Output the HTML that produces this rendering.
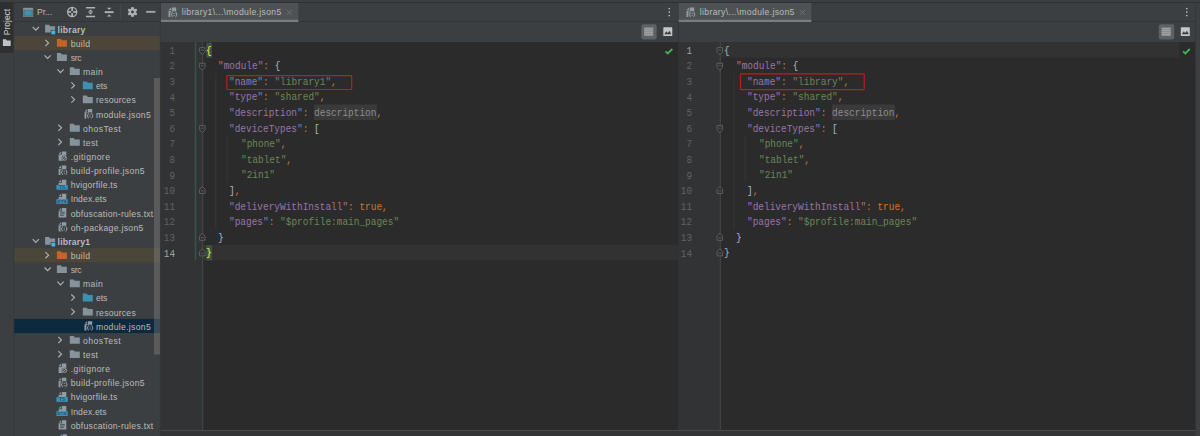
<!DOCTYPE html>
<html><head><meta charset="utf-8"><title>ide</title>
<style>
html,body{margin:0;padding:0}
body{width:1200px;height:436px;overflow:hidden;background:#3c3f41;position:relative;font-family:"Liberation Sans",sans-serif;font-size:8.64px;color:#bbbbbb}
.a{position:absolute}
.t{position:absolute;white-space:pre;line-height:14.145px;height:14.145px;color:#bbbbbb}
.b{font-weight:bold}
svg{position:absolute;overflow:visible}
.c{position:absolute;white-space:pre;font-family:"Liberation Mono",monospace;font-size:10.8px;line-height:15.6px;height:15.6px;color:#a9b7c6;transform-origin:0 0;transform:scaleX(0.875)}
.k{color:#9876aa}.s{color:#6a8759}.o{color:#cc7832}.p{color:#a9b7c6}
.ln{position:absolute;font-family:"Liberation Mono",monospace;font-size:10.6px;line-height:15.6px;height:15.6px;color:#606366;text-align:left;transform-origin:100% 0;transform:scaleX(0.875)}
</style></head><body>


<svg class="L" width="1200" height="436" viewBox="0 0 1200 436" style="left:0;top:0">
<rect x="0" y="0" width="1200" height="2" fill="#3c3f41"/>
<rect x="0" y="2" width="1200" height="1" fill="#2f3132"/>
<rect x="0" y="3" width="13.4" height="433" fill="#3c3f41"/>
<rect x="0" y="3" width="13.4" height="50" fill="#2d2f30"/>
<rect x="13.4" y="3" width="0.8" height="433" fill="#35383a"/>
<svg x="2.9" y="39.2" width="7.8" height="6.8" viewBox="0 0 10 7.8" preserveAspectRatio="none"><g fill="#c0c2c4"><path d="M0 0 H3.9 L5 1.4 H10 V7.8 H0 Z"/></g></svg>
<rect x="14.2" y="21" width="146" height="1" fill="#323537"/>
<svg x="23" y="7.8" width="10.2" height="9.2" viewBox="0 0 10.2 9.2"><rect x="0.3" y="0.3" width="9.6" height="8.6" fill="#626b71" stroke="#7b868c" stroke-width="0.6"/><rect x="0.3" y="0.3" width="9.6" height="1.7" fill="#8b969c"/><rect x="1.7" y="2.8" width="6.9" height="4.8" fill="#3d93b8"/></svg>
<svg x="66.9" y="6.7" width="10.5" height="10.5" viewBox="0 0 10.5 10.5"><circle cx="5.25" cy="5.25" r="4.6" fill="none" stroke="#afb1b3" stroke-width="1.25"/><path d="M5.25 0.8V4.2M5.25 6.3V9.7M0.8 5.25H4.2M6.3 5.25H9.7" stroke="#afb1b3" stroke-width="1.8"/></svg>
<svg x="86" y="6.9" width="9.1" height="10.3" viewBox="0 0 9.1 10.3"><path d="M0 0.8H9.1M0 9.5H9.1" stroke="#afb1b3" stroke-width="1.5"/><path d="M4.55 2.6 L6.9 4.6 H2.2Z M4.55 7.7 L6.9 5.7 H2.2Z" fill="#afb1b3"/><rect x="2.6" y="4.4" width="3.9" height="1.5" fill="#8a8c8e"/></svg>
<svg x="104.7" y="6.9" width="8.9" height="10.3" viewBox="0 0 8.9 10.3"><path d="M0 5.25H8.9" stroke="#afb1b3" stroke-width="1.9"/><path d="M4.45 2.9 L6.8 0.8 H2.1Z M4.45 7.5 L6.8 9.6 H2.1Z" fill="#afb1b3"/></svg>
<rect x="120.2" y="5" width="0.9" height="14" fill="#4a4d4f"/>
<svg x="127.6" y="6.7" width="9.8" height="10.6" viewBox="-5 -5.3 10 10.6"><g fill="#afb1b3"><circle r="3.3"/><path d="M-1.9 -2.6 L-0.9 -5.1 H0.9 L1.9 -2.6Z" transform="rotate(0)"/><path d="M-1.9 -2.6 L-0.9 -5.1 H0.9 L1.9 -2.6Z" transform="rotate(60)"/><path d="M-1.9 -2.6 L-0.9 -5.1 H0.9 L1.9 -2.6Z" transform="rotate(120)"/><path d="M-1.9 -2.6 L-0.9 -5.1 H0.9 L1.9 -2.6Z" transform="rotate(180)"/><path d="M-1.9 -2.6 L-0.9 -5.1 H0.9 L1.9 -2.6Z" transform="rotate(240)"/><path d="M-1.9 -2.6 L-0.9 -5.1 H0.9 L1.9 -2.6Z" transform="rotate(300)"/></g><circle r="1.45" fill="#3c3f41"/></svg>
<rect x="146.2" y="10.9" width="9.2" height="1.9" fill="#a3a5a7"/>
<svg x="32.7" y="27.02" width="6.2" height="3.2" viewBox="0 0 6.2 3.2"><g><path d="M0 0 L3.1 3.2 L6.2 0" fill="none" stroke="#afb1b3" stroke-width="1.15"/></g></svg>
<svg x="45.1" y="24.82" width="10" height="7.8" viewBox="0 0 10 7.8"><g fill="#87939a"><path d="M0 0 H3.9 L5 1.4 H10 V7.8 H0 Z"/></g><rect x="5.6" y="5" width="5" height="5" fill="#3c3f41"/><rect x="6.3" y="5.7" width="3.8" height="3.8" fill="#40b6e0"/></svg>
<rect x="14.2" y="36" width="145.8" height="14.14" fill="#4b4639"/>
<svg x="45.4" y="39.87" width="3.2" height="6.2" viewBox="0 0 3.2 6.2"><g><path d="M0 0 L3.2 3.1 L0 6.2" fill="none" stroke="#afb1b3" stroke-width="1.15"/></g></svg>
<svg x="56.9" y="38.97" width="10" height="7.8" viewBox="0 0 10 7.8"><g fill="#c4632c"><path d="M0 0 H3.9 L5 1.4 H10 V7.8 H0 Z"/></g></svg>
<svg x="44.5" y="55.31" width="6.2" height="3.2" viewBox="0 0 6.2 3.2"><g><path d="M0 0 L3.1 3.2 L6.2 0" fill="none" stroke="#afb1b3" stroke-width="1.15"/></g></svg>
<svg x="56.9" y="53.11" width="10" height="7.8" viewBox="0 0 10 7.8"><g fill="#87939a"><path d="M0 0 H3.9 L5 1.4 H10 V7.8 H0 Z"/></g></svg>
<svg x="57.4" y="69.46" width="6.2" height="3.2" viewBox="0 0 6.2 3.2"><g><path d="M0 0 L3.1 3.2 L6.2 0" fill="none" stroke="#afb1b3" stroke-width="1.15"/></g></svg>
<svg x="69.8" y="67.26" width="10" height="7.8" viewBox="0 0 10 7.8"><g fill="#87939a"><path d="M0 0 H3.9 L5 1.4 H10 V7.8 H0 Z"/></g></svg>
<svg x="71.3" y="82.3" width="3.2" height="6.2" viewBox="0 0 3.2 6.2"><g><path d="M0 0 L3.2 3.1 L0 6.2" fill="none" stroke="#afb1b3" stroke-width="1.15"/></g></svg>
<svg x="82.8" y="81.4" width="10" height="7.8" viewBox="0 0 10 7.8"><g fill="#3e8fb0"><path d="M0 0 H3.9 L5 1.4 H10 V7.8 H0 Z"/></g></svg>
<svg x="71.3" y="96.45" width="3.2" height="6.2" viewBox="0 0 3.2 6.2"><g><path d="M0 0 L3.2 3.1 L0 6.2" fill="none" stroke="#afb1b3" stroke-width="1.15"/></g></svg>
<svg x="82.8" y="95.55" width="10" height="7.8" viewBox="0 0 10 7.8"><g fill="#87939a"><path d="M0 0 H3.9 L5 1.4 H10 V7.8 H0 Z"/></g></svg>
<svg x="84.5" y="108.99" width="9" height="9.6" viewBox="0 0 9 10.4" preserveAspectRatio="none"><g><path d="M3.4 0 H7.7 V10.2 H0 V3.4 H3.4 Z" fill="#909ca4"/><path d="M2.6 0 V2.6 H0 Z" fill="#909ca4"/></g><rect x="1.9" y="3.9" width="7.6" height="6.9" rx="1.5" fill="#3c3f41"/><g fill="none" stroke="#aeb8be" stroke-width="0.85"><path d="M4.3 4.7 C3.2 4.7 3.7 6.3 3.3 6.9 L2.6 7.3 L3.3 7.7 C3.7 8.3 3.2 9.9 4.3 9.9"/><path d="M7 4.7 C8.1 4.7 7.6 6.3 8 6.9 L8.7 7.3 L8 7.7 C7.6 8.3 8.1 9.9 7 9.9"/><path d="M5.65 5.8 V6.8 M5.65 7.9 V8.9" stroke-width="1"/></g></svg>
<svg x="58.3" y="124.74" width="3.2" height="6.2" viewBox="0 0 3.2 6.2"><g><path d="M0 0 L3.2 3.1 L0 6.2" fill="none" stroke="#afb1b3" stroke-width="1.15"/></g></svg>
<svg x="69.8" y="123.84" width="10" height="7.8" viewBox="0 0 10 7.8"><g fill="#87939a"><path d="M0 0 H3.9 L5 1.4 H10 V7.8 H0 Z"/></g></svg>
<svg x="58.3" y="138.88" width="3.2" height="6.2" viewBox="0 0 3.2 6.2"><g><path d="M0 0 L3.2 3.1 L0 6.2" fill="none" stroke="#afb1b3" stroke-width="1.15"/></g></svg>
<svg x="69.8" y="137.98" width="10" height="7.8" viewBox="0 0 10 7.8"><g fill="#87939a"><path d="M0 0 H3.9 L5 1.4 H10 V7.8 H0 Z"/></g></svg>
<svg x="58.6" y="151.43" width="9" height="9.6" viewBox="0 0 9 10.4" preserveAspectRatio="none"><g><path d="M3.4 0 H7.7 V10.2 H0 V3.4 H3.4 Z" fill="#909ca4"/><path d="M2.6 0 V2.6 H0 Z" fill="#909ca4"/></g><circle cx="6" cy="7.4" r="2.9" fill="#3c3f41"/><circle cx="6" cy="7.4" r="2.1" fill="none" stroke="#aab3b9" stroke-width="0.8"/><path d="M4.6 8.8L7.4 6" stroke="#aab3b9" stroke-width="0.8"/></svg>
<svg x="58.6" y="165.57" width="9" height="9.6" viewBox="0 0 9 10.4" preserveAspectRatio="none"><g><path d="M3.4 0 H7.7 V10.2 H0 V3.4 H3.4 Z" fill="#909ca4"/><path d="M2.6 0 V2.6 H0 Z" fill="#909ca4"/></g><rect x="1.9" y="3.9" width="7.6" height="6.9" rx="1.5" fill="#3c3f41"/><g fill="none" stroke="#aeb8be" stroke-width="0.85"><path d="M4.3 4.7 C3.2 4.7 3.7 6.3 3.3 6.9 L2.6 7.3 L3.3 7.7 C3.7 8.3 3.2 9.9 4.3 9.9"/><path d="M7 4.7 C8.1 4.7 7.6 6.3 8 6.9 L8.7 7.3 L8 7.7 C7.6 8.3 8.1 9.9 7 9.9"/><path d="M5.65 5.8 V6.8 M5.65 7.9 V8.9" stroke-width="1"/></g></svg>
<svg x="58.6" y="179.72" width="9" height="9.6" viewBox="0 0 9 10.4" preserveAspectRatio="none"><g><path d="M3.4 0 H7.7 V10.2 H0 V3.4 H3.4 Z" fill="#909ca4"/><path d="M2.6 0 V2.6 H0 Z" fill="#909ca4"/></g><rect x="-2.2" y="5.7" width="11.4" height="5.1" fill="#3592b8"/><text x="3.5" y="10.1" font-family="Liberation Sans" font-size="4.9" font-weight="bold" fill="#2a556a" text-anchor="middle">TS</text></svg>
<svg x="58.6" y="193.86" width="9" height="9.6" viewBox="0 0 9 10.4" preserveAspectRatio="none"><g><path d="M3.4 0 H7.7 V10.2 H0 V3.4 H3.4 Z" fill="#909ca4"/><path d="M2.6 0 V2.6 H0 Z" fill="#909ca4"/></g><rect x="-2.2" y="5.7" width="11.4" height="5.1" fill="#3592b8"/><text x="3.5" y="10.1" font-family="Liberation Sans" font-size="4.7" font-weight="bold" fill="#2a556a" text-anchor="middle">ETS</text></svg>
<svg x="58.6" y="208.01" width="9" height="9.6" viewBox="0 0 9 10.4" preserveAspectRatio="none"><g><path d="M3.4 0 H7.7 V10.2 H0 V3.4 H3.4 Z" fill="#909ca4"/><path d="M2.6 0 V2.6 H0 Z" fill="#909ca4"/></g><path d="M1.6 4.6H6.2M1.6 6.3H6.2M1.6 8H5" stroke="#3c3f41" stroke-width="0.8"/></svg>
<svg x="58.6" y="222.15" width="9" height="9.6" viewBox="0 0 9 10.4" preserveAspectRatio="none"><g><path d="M3.4 0 H7.7 V10.2 H0 V3.4 H3.4 Z" fill="#909ca4"/><path d="M2.6 0 V2.6 H0 Z" fill="#909ca4"/></g><rect x="1.9" y="3.9" width="7.6" height="6.9" rx="1.5" fill="#3c3f41"/><g fill="none" stroke="#aeb8be" stroke-width="0.85"><path d="M4.3 4.7 C3.2 4.7 3.7 6.3 3.3 6.9 L2.6 7.3 L3.3 7.7 C3.7 8.3 3.2 9.9 4.3 9.9"/><path d="M7 4.7 C8.1 4.7 7.6 6.3 8 6.9 L8.7 7.3 L8 7.7 C7.6 8.3 8.1 9.9 7 9.9"/><path d="M5.65 5.8 V6.8 M5.65 7.9 V8.9" stroke-width="1"/></g></svg>
<svg x="32.7" y="239.2" width="6.2" height="3.2" viewBox="0 0 6.2 3.2"><g><path d="M0 0 L3.1 3.2 L6.2 0" fill="none" stroke="#afb1b3" stroke-width="1.15"/></g></svg>
<svg x="45.1" y="237" width="10" height="7.8" viewBox="0 0 10 7.8"><g fill="#87939a"><path d="M0 0 H3.9 L5 1.4 H10 V7.8 H0 Z"/></g><rect x="5.6" y="5" width="5" height="5" fill="#3c3f41"/><rect x="6.3" y="5.7" width="3.8" height="3.8" fill="#40b6e0"/></svg>
<rect x="14.2" y="248.17" width="145.8" height="14.14" fill="#4b4639"/>
<svg x="45.4" y="252.04" width="3.2" height="6.2" viewBox="0 0 3.2 6.2"><g><path d="M0 0 L3.2 3.1 L0 6.2" fill="none" stroke="#afb1b3" stroke-width="1.15"/></g></svg>
<svg x="56.9" y="251.14" width="10" height="7.8" viewBox="0 0 10 7.8"><g fill="#c4632c"><path d="M0 0 H3.9 L5 1.4 H10 V7.8 H0 Z"/></g></svg>
<svg x="44.5" y="267.49" width="6.2" height="3.2" viewBox="0 0 6.2 3.2"><g><path d="M0 0 L3.1 3.2 L6.2 0" fill="none" stroke="#afb1b3" stroke-width="1.15"/></g></svg>
<svg x="56.9" y="265.29" width="10" height="7.8" viewBox="0 0 10 7.8"><g fill="#87939a"><path d="M0 0 H3.9 L5 1.4 H10 V7.8 H0 Z"/></g></svg>
<svg x="57.4" y="281.63" width="6.2" height="3.2" viewBox="0 0 6.2 3.2"><g><path d="M0 0 L3.1 3.2 L6.2 0" fill="none" stroke="#afb1b3" stroke-width="1.15"/></g></svg>
<svg x="69.8" y="279.43" width="10" height="7.8" viewBox="0 0 10 7.8"><g fill="#87939a"><path d="M0 0 H3.9 L5 1.4 H10 V7.8 H0 Z"/></g></svg>
<svg x="71.3" y="294.48" width="3.2" height="6.2" viewBox="0 0 3.2 6.2"><g><path d="M0 0 L3.2 3.1 L0 6.2" fill="none" stroke="#afb1b3" stroke-width="1.15"/></g></svg>
<svg x="82.8" y="293.58" width="10" height="7.8" viewBox="0 0 10 7.8"><g fill="#3e8fb0"><path d="M0 0 H3.9 L5 1.4 H10 V7.8 H0 Z"/></g></svg>
<svg x="71.3" y="308.62" width="3.2" height="6.2" viewBox="0 0 3.2 6.2"><g><path d="M0 0 L3.2 3.1 L0 6.2" fill="none" stroke="#afb1b3" stroke-width="1.15"/></g></svg>
<svg x="82.8" y="307.72" width="10" height="7.8" viewBox="0 0 10 7.8"><g fill="#87939a"><path d="M0 0 H3.9 L5 1.4 H10 V7.8 H0 Z"/></g></svg>
<rect x="14.2" y="318.9" width="145.8" height="14.14" fill="#0d293e"/>
<svg x="84.5" y="321.17" width="9" height="9.6" viewBox="0 0 9 10.4" preserveAspectRatio="none"><g><path d="M3.4 0 H7.7 V10.2 H0 V3.4 H3.4 Z" fill="#909ca4"/><path d="M2.6 0 V2.6 H0 Z" fill="#909ca4"/></g><rect x="1.9" y="3.9" width="7.6" height="6.9" rx="1.5" fill="#0d293e"/><g fill="none" stroke="#aeb8be" stroke-width="0.85"><path d="M4.3 4.7 C3.2 4.7 3.7 6.3 3.3 6.9 L2.6 7.3 L3.3 7.7 C3.7 8.3 3.2 9.9 4.3 9.9"/><path d="M7 4.7 C8.1 4.7 7.6 6.3 8 6.9 L8.7 7.3 L8 7.7 C7.6 8.3 8.1 9.9 7 9.9"/><path d="M5.65 5.8 V6.8 M5.65 7.9 V8.9" stroke-width="1"/></g></svg>
<svg x="58.3" y="336.91" width="3.2" height="6.2" viewBox="0 0 3.2 6.2"><g><path d="M0 0 L3.2 3.1 L0 6.2" fill="none" stroke="#afb1b3" stroke-width="1.15"/></g></svg>
<svg x="69.8" y="336.01" width="10" height="7.8" viewBox="0 0 10 7.8"><g fill="#87939a"><path d="M0 0 H3.9 L5 1.4 H10 V7.8 H0 Z"/></g></svg>
<svg x="58.3" y="351.06" width="3.2" height="6.2" viewBox="0 0 3.2 6.2"><g><path d="M0 0 L3.2 3.1 L0 6.2" fill="none" stroke="#afb1b3" stroke-width="1.15"/></g></svg>
<svg x="69.8" y="350.16" width="10" height="7.8" viewBox="0 0 10 7.8"><g fill="#87939a"><path d="M0 0 H3.9 L5 1.4 H10 V7.8 H0 Z"/></g></svg>
<svg x="58.6" y="363.6" width="9" height="9.6" viewBox="0 0 9 10.4" preserveAspectRatio="none"><g><path d="M3.4 0 H7.7 V10.2 H0 V3.4 H3.4 Z" fill="#909ca4"/><path d="M2.6 0 V2.6 H0 Z" fill="#909ca4"/></g><circle cx="6" cy="7.4" r="2.9" fill="#3c3f41"/><circle cx="6" cy="7.4" r="2.1" fill="none" stroke="#aab3b9" stroke-width="0.8"/><path d="M4.6 8.8L7.4 6" stroke="#aab3b9" stroke-width="0.8"/></svg>
<svg x="58.6" y="377.75" width="9" height="9.6" viewBox="0 0 9 10.4" preserveAspectRatio="none"><g><path d="M3.4 0 H7.7 V10.2 H0 V3.4 H3.4 Z" fill="#909ca4"/><path d="M2.6 0 V2.6 H0 Z" fill="#909ca4"/></g><rect x="1.9" y="3.9" width="7.6" height="6.9" rx="1.5" fill="#3c3f41"/><g fill="none" stroke="#aeb8be" stroke-width="0.85"><path d="M4.3 4.7 C3.2 4.7 3.7 6.3 3.3 6.9 L2.6 7.3 L3.3 7.7 C3.7 8.3 3.2 9.9 4.3 9.9"/><path d="M7 4.7 C8.1 4.7 7.6 6.3 8 6.9 L8.7 7.3 L8 7.7 C7.6 8.3 8.1 9.9 7 9.9"/><path d="M5.65 5.8 V6.8 M5.65 7.9 V8.9" stroke-width="1"/></g></svg>
<svg x="58.6" y="391.89" width="9" height="9.6" viewBox="0 0 9 10.4" preserveAspectRatio="none"><g><path d="M3.4 0 H7.7 V10.2 H0 V3.4 H3.4 Z" fill="#909ca4"/><path d="M2.6 0 V2.6 H0 Z" fill="#909ca4"/></g><rect x="-2.2" y="5.7" width="11.4" height="5.1" fill="#3592b8"/><text x="3.5" y="10.1" font-family="Liberation Sans" font-size="4.9" font-weight="bold" fill="#2a556a" text-anchor="middle">TS</text></svg>
<svg x="58.6" y="406.04" width="9" height="9.6" viewBox="0 0 9 10.4" preserveAspectRatio="none"><g><path d="M3.4 0 H7.7 V10.2 H0 V3.4 H3.4 Z" fill="#909ca4"/><path d="M2.6 0 V2.6 H0 Z" fill="#909ca4"/></g><rect x="-2.2" y="5.7" width="11.4" height="5.1" fill="#3592b8"/><text x="3.5" y="10.1" font-family="Liberation Sans" font-size="4.7" font-weight="bold" fill="#2a556a" text-anchor="middle">ETS</text></svg>
<svg x="58.6" y="420.18" width="9" height="9.6" viewBox="0 0 9 10.4" preserveAspectRatio="none"><g><path d="M3.4 0 H7.7 V10.2 H0 V3.4 H3.4 Z" fill="#909ca4"/><path d="M2.6 0 V2.6 H0 Z" fill="#909ca4"/></g><path d="M1.6 4.6H6.2M1.6 6.3H6.2M1.6 8H5" stroke="#3c3f41" stroke-width="0.8"/></svg>
<svg x="59.2" y="434.33" width="9" height="9.6" viewBox="0 0 9 10.4" preserveAspectRatio="none"><g><path d="M3.4 0 H7.7 V10.2 H0 V3.4 H3.4 Z" fill="#909ca4"/><path d="M2.6 0 V2.6 H0 Z" fill="#909ca4"/></g><rect x="1.9" y="3.9" width="7.6" height="6.9" rx="1.5" fill="#3c3f41"/><g fill="none" stroke="#aeb8be" stroke-width="0.85"><path d="M4.3 4.7 C3.2 4.7 3.7 6.3 3.3 6.9 L2.6 7.3 L3.3 7.7 C3.7 8.3 3.2 9.9 4.3 9.9"/><path d="M7 4.7 C8.1 4.7 7.6 6.3 8 6.9 L8.7 7.3 L8 7.7 C7.6 8.3 8.1 9.9 7 9.9"/><path d="M5.65 5.8 V6.8 M5.65 7.9 V8.9" stroke-width="1"/></g></svg>
<rect x="160.3" y="3" width="518" height="18.6" fill="#3c3f41"/>
<rect x="160.3" y="21.2" width="518" height="0.8" fill="#323537"/>
<rect x="160.8" y="3" width="137.5" height="19" fill="#4e5254"/>
<rect x="160.8" y="19.8" width="137.5" height="2.2" fill="#787d82"/>
<svg x="168.5" y="7.5" width="9" height="9.8" viewBox="0 0 9 10.4" preserveAspectRatio="none"><g><path d="M3.4 0 H7.7 V10.2 H0 V3.4 H3.4 Z" fill="#909ca4"/><path d="M2.6 0 V2.6 H0 Z" fill="#909ca4"/></g><rect x="1.9" y="3.9" width="7.6" height="6.9" rx="1.5" fill="#4e5254"/><g fill="none" stroke="#aeb8be" stroke-width="0.85"><path d="M4.3 4.7 C3.2 4.7 3.7 6.3 3.3 6.9 L2.6 7.3 L3.3 7.7 C3.7 8.3 3.2 9.9 4.3 9.9"/><path d="M7 4.7 C8.1 4.7 7.6 6.3 8 6.9 L8.7 7.3 L8 7.7 C7.6 8.3 8.1 9.9 7 9.9"/><path d="M5.65 5.8 V6.8 M5.65 7.9 V8.9" stroke-width="1"/></g></svg>
<svg x="286.7" y="9.6" width="5.6" height="5.6" viewBox="0 0 5.6 5.6"><path d="M0.3 0.3L5.3 5.3M5.3 0.3L0.3 5.3" stroke="#6e7275" stroke-width="0.9"/></svg>
<rect x="160.3" y="22" width="518" height="20" fill="#3c3f41"/>
<rect x="160.8" y="42" width="517.5" height="388.4" fill="#2b2b2b"/>
<rect x="160.8" y="42" width="42.2" height="388.4" fill="#313335"/>
<rect x="203" y="244.8" width="475.3" height="15.6" fill="#323232"/>
<rect x="202.3" y="42" width="0.9" height="388.4" fill="#484a4b"/>
<rect x="194.7" y="42.3" width="1.6" height="218.2" fill="#3a514b"/>
<svg x="199.1" y="47.15" width="6.5" height="8.1" viewBox="0 0 6.5 8.1"><g><path d="M0.5 0.5 H6 V4.6 L3.25 7.6 L0.5 4.6 Z" fill="#2d2f30" stroke="#6a6a6a" stroke-width="0.8"/><path d="M1.9 3 H4.6" stroke="#6a6a6a" stroke-width="0.8"/></g></svg>
<svg x="199.1" y="62.75" width="6.5" height="8.1" viewBox="0 0 6.5 8.1"><g><path d="M0.5 0.5 H6 V4.6 L3.25 7.6 L0.5 4.6 Z" fill="#2d2f30" stroke="#6a6a6a" stroke-width="0.8"/><path d="M1.9 3 H4.6" stroke="#6a6a6a" stroke-width="0.8"/></g></svg>
<svg x="199.1" y="125.15" width="6.5" height="8.1" viewBox="0 0 6.5 8.1"><g><path d="M0.5 0.5 H6 V4.6 L3.25 7.6 L0.5 4.6 Z" fill="#2d2f30" stroke="#6a6a6a" stroke-width="0.8"/><path d="M1.9 3 H4.6" stroke="#6a6a6a" stroke-width="0.8"/></g></svg>
<svg x="199.1" y="185.85" width="6.5" height="8.1" viewBox="0 0 6.5 8.1"><g><path d="M0.5 7.6 H6 V3.5 L3.25 0.5 L0.5 3.5 Z" fill="#2d2f30" stroke="#6a6a6a" stroke-width="0.8"/><path d="M1.9 5 H4.6" stroke="#6a6a6a" stroke-width="0.8"/></g></svg>
<svg x="199.1" y="232.65" width="6.5" height="8.1" viewBox="0 0 6.5 8.1"><g><path d="M0.5 7.6 H6 V3.5 L3.25 0.5 L0.5 3.5 Z" fill="#2d2f30" stroke="#6a6a6a" stroke-width="0.8"/><path d="M1.9 5 H4.6" stroke="#6a6a6a" stroke-width="0.8"/></g></svg>
<svg x="199.1" y="248.25" width="6.5" height="8.1" viewBox="0 0 6.5 8.1"><g><path d="M0.5 7.6 H6 V3.5 L3.25 0.5 L0.5 3.5 Z" fill="#2d2f30" stroke="#6a6a6a" stroke-width="0.8"/><path d="M1.9 5 H4.6" stroke="#6a6a6a" stroke-width="0.8"/></g></svg>
<rect x="215.5" y="73.2" width="0.8" height="156" fill="#3a3a3a"/>
<rect x="226.7" y="135.6" width="0.8" height="46.8" fill="#3a3a3a"/>
<rect x="206.2" y="42.6" width="5.8" height="15.2" fill="#3b514d"/>
<rect x="206.2" y="245.2" width="5.8" height="15.2" fill="#3b514d"/>
<rect x="313.93" y="104.5" width="62.97" height="15.5" fill="#3a3a3a"/>
<rect x="678.3" y="3" width="521.7" height="18.6" fill="#3c3f41"/>
<rect x="678.3" y="21.2" width="521.7" height="0.8" fill="#323537"/>
<rect x="678.8" y="3" width="132.5" height="19" fill="#4e5254"/>
<rect x="678.8" y="19.8" width="132.5" height="2.2" fill="#787d82"/>
<svg x="686.5" y="7.5" width="9" height="9.8" viewBox="0 0 9 10.4" preserveAspectRatio="none"><g><path d="M3.4 0 H7.7 V10.2 H0 V3.4 H3.4 Z" fill="#909ca4"/><path d="M2.6 0 V2.6 H0 Z" fill="#909ca4"/></g><rect x="1.9" y="3.9" width="7.6" height="6.9" rx="1.5" fill="#4e5254"/><g fill="none" stroke="#aeb8be" stroke-width="0.85"><path d="M4.3 4.7 C3.2 4.7 3.7 6.3 3.3 6.9 L2.6 7.3 L3.3 7.7 C3.7 8.3 3.2 9.9 4.3 9.9"/><path d="M7 4.7 C8.1 4.7 7.6 6.3 8 6.9 L8.7 7.3 L8 7.7 C7.6 8.3 8.1 9.9 7 9.9"/><path d="M5.65 5.8 V6.8 M5.65 7.9 V8.9" stroke-width="1"/></g></svg>
<svg x="799.7" y="9.6" width="5.6" height="5.6" viewBox="0 0 5.6 5.6"><path d="M0.3 0.3L5.3 5.3M5.3 0.3L0.3 5.3" stroke="#6e7275" stroke-width="0.9"/></svg>
<rect x="678.3" y="22" width="521.7" height="20" fill="#3c3f41"/>
<rect x="678.8" y="42" width="521.2" height="388.4" fill="#2b2b2b"/>
<rect x="678.8" y="42" width="41.7" height="388.4" fill="#313335"/>
<rect x="720.5" y="42" width="479.5" height="15.6" fill="#323232"/>
<rect x="719.8" y="42" width="0.9" height="388.4" fill="#484a4b"/>
<svg x="716.6" y="47.15" width="6.5" height="8.1" viewBox="0 0 6.5 8.1"><g><path d="M0.5 0.5 H6 V4.6 L3.25 7.6 L0.5 4.6 Z" fill="#2d2f30" stroke="#6a6a6a" stroke-width="0.8"/><path d="M1.9 3 H4.6" stroke="#6a6a6a" stroke-width="0.8"/></g></svg>
<svg x="716.6" y="62.75" width="6.5" height="8.1" viewBox="0 0 6.5 8.1"><g><path d="M0.5 0.5 H6 V4.6 L3.25 7.6 L0.5 4.6 Z" fill="#2d2f30" stroke="#6a6a6a" stroke-width="0.8"/><path d="M1.9 3 H4.6" stroke="#6a6a6a" stroke-width="0.8"/></g></svg>
<svg x="716.6" y="125.15" width="6.5" height="8.1" viewBox="0 0 6.5 8.1"><g><path d="M0.5 0.5 H6 V4.6 L3.25 7.6 L0.5 4.6 Z" fill="#2d2f30" stroke="#6a6a6a" stroke-width="0.8"/><path d="M1.9 3 H4.6" stroke="#6a6a6a" stroke-width="0.8"/></g></svg>
<svg x="716.6" y="185.85" width="6.5" height="8.1" viewBox="0 0 6.5 8.1"><g><path d="M0.5 7.6 H6 V3.5 L3.25 0.5 L0.5 3.5 Z" fill="#2d2f30" stroke="#6a6a6a" stroke-width="0.8"/><path d="M1.9 5 H4.6" stroke="#6a6a6a" stroke-width="0.8"/></g></svg>
<svg x="716.6" y="232.65" width="6.5" height="8.1" viewBox="0 0 6.5 8.1"><g><path d="M0.5 7.6 H6 V3.5 L3.25 0.5 L0.5 3.5 Z" fill="#2d2f30" stroke="#6a6a6a" stroke-width="0.8"/><path d="M1.9 5 H4.6" stroke="#6a6a6a" stroke-width="0.8"/></g></svg>
<svg x="716.6" y="248.25" width="6.5" height="8.1" viewBox="0 0 6.5 8.1"><g><path d="M0.5 7.6 H6 V3.5 L3.25 0.5 L0.5 3.5 Z" fill="#2d2f30" stroke="#6a6a6a" stroke-width="0.8"/><path d="M1.9 5 H4.6" stroke="#6a6a6a" stroke-width="0.8"/></g></svg>
<rect x="733.5" y="73.2" width="0.8" height="156" fill="#3a3a3a"/>
<rect x="744.7" y="135.6" width="0.8" height="46.8" fill="#3a3a3a"/>
<rect x="831.93" y="104.5" width="62.97" height="15.5" fill="#3a3a3a"/>
<rect x="226.9" y="75.6" width="124.8" height="13.9" rx="0.5" fill="none" stroke="#bf1c22" stroke-width="1.2"/>
<rect x="740.5" y="73.8" width="123.7" height="15.8" rx="0.5" fill="none" stroke="#bf1c22" stroke-width="1.2"/>
<rect x="668.45" y="7.75" width="1.7" height="1.7" rx="1" fill="#b4b6b8"/>
<rect x="668.45" y="11.2" width="1.7" height="1.7" rx="1" fill="#b4b6b8"/>
<rect x="668.45" y="14.65" width="1.7" height="1.7" rx="1" fill="#b4b6b8"/>
<rect x="641.3" y="24.2" width="15.4" height="15.4" rx="2" fill="#5c6164"/>
<svg x="644.1" y="27.3" width="9.1" height="8.8" viewBox="0 0 9.4 9" preserveAspectRatio="none"><rect width="9.4" height="9" fill="#85898c"/><path d="M0 1.5H9.4M0 3.5H9.4M0 5.5H9.4M0 7.5H9.4" stroke="#a4a7aa" stroke-width="1"/></svg>
<svg x="663.3" y="27.3" width="9" height="8.8" viewBox="0 0 9 8.8"><rect width="9" height="8.8" rx="0.6" fill="#c4c6c8"/><path d="M1 7 L3 4 L4.4 5.8 L6.2 3.4 L8 7 Z" fill="#3c3f41"/></svg>
<rect x="661.5" y="42" width="15.6" height="16" fill="#2b2b2b"/>
<svg x="664.7" y="48.1" width="8.4" height="6.5" viewBox="0 0 8.4 6.5"><path d="M0.8 3.3 L3.1 5.3 L7.6 0.9" fill="none" stroke="#42b153" stroke-width="1.9"/></svg>
<rect x="1185.95" y="7.75" width="1.7" height="1.7" rx="1" fill="#b4b6b8"/>
<rect x="1185.95" y="11.2" width="1.7" height="1.7" rx="1" fill="#b4b6b8"/>
<rect x="1185.95" y="14.65" width="1.7" height="1.7" rx="1" fill="#b4b6b8"/>
<rect x="1158.8" y="24.2" width="15.4" height="15.4" rx="2" fill="#5c6164"/>
<svg x="1161.6" y="27.3" width="9.1" height="8.8" viewBox="0 0 9.4 9" preserveAspectRatio="none"><rect width="9.4" height="9" fill="#85898c"/><path d="M0 1.5H9.4M0 3.5H9.4M0 5.5H9.4M0 7.5H9.4" stroke="#a4a7aa" stroke-width="1"/></svg>
<svg x="1180.8" y="27.3" width="9" height="8.8" viewBox="0 0 9 8.8"><rect width="9" height="8.8" rx="0.6" fill="#c4c6c8"/><path d="M1 7 L3 4 L4.4 5.8 L6.2 3.4 L8 7 Z" fill="#3c3f41"/></svg>
<rect x="1179" y="42" width="15.6" height="16" fill="#2b2b2b"/>
<svg x="1182.2" y="48.1" width="8.4" height="6.5" viewBox="0 0 8.4 6.5"><path d="M0.8 3.3 L3.1 5.3 L7.6 0.9" fill="none" stroke="#42b153" stroke-width="1.9"/></svg>
<rect x="677.9" y="22" width="0.8" height="408.4" fill="#323537"/>
<rect x="1195.6" y="3" width="4.4" height="433" fill="#3c3f41"/>
<rect x="1195.2" y="3" width="0.8" height="428" fill="#323537"/>
<rect x="160.3" y="430.1" width="1035.2" height="0.9" fill="#4a4c4e"/>
<rect x="160.3" y="431" width="1035.2" height="5" fill="#323436"/>
<rect x="159.9" y="3" width="0.8" height="433" fill="#35383a"/>
</svg>
<div class="a" style="left:0;top:3px;width:13.4px;height:32px"><div class="a" style="left:7.1px;top:18.8px;transform:translate(-50%,-50%) rotate(-90deg);white-space:pre;font-size:8.5px;color:#d0d0d0;letter-spacing:0px">Project</div></div>
<div class="t" style="left:37px;top:5.2px">Pr...</div>
<div class="t b" style="left:57.6px;top:22.65px;letter-spacing:0.22px">library</div>
<div class="t" style="left:70.7px;top:36.8px;letter-spacing:0.27px">build</div>
<div class="t" style="left:70.7px;top:50.94px;letter-spacing:-0.3px">src</div>
<div class="t" style="left:83px;top:65.08px;letter-spacing:0.33px">main</div>
<div class="t" style="left:96px;top:79.23px;letter-spacing:-0.11px">ets</div>
<div class="t" style="left:96px;top:93.37px;letter-spacing:0.23px">resources</div>
<div class="t" style="left:96px;top:107.52px;letter-spacing:0.31px">module.json5</div>
<div class="t" style="left:83px;top:121.67px;letter-spacing:0.45px">ohosTest</div>
<div class="t" style="left:83px;top:135.81px;letter-spacing:0.36px">test</div>
<div class="t" style="left:70.7px;top:149.96px;letter-spacing:0.42px">.gitignore</div>
<div class="t" style="left:70.7px;top:164.1px;letter-spacing:0.35px">build-profile.json5</div>
<div class="t" style="left:70.7px;top:178.25px;letter-spacing:0.25px">hvigorfile.ts</div>
<div class="t" style="left:70.7px;top:192.39px;letter-spacing:0.12px">Index.ets</div>
<div class="t" style="left:70.7px;top:206.53px;letter-spacing:0.27px">obfuscation-rules.txt</div>
<div class="t" style="left:70.7px;top:220.68px;letter-spacing:0.3px">oh-package.json5</div>
<div class="t b" style="left:57.6px;top:234.82px;letter-spacing:0.17px">library1</div>
<div class="t" style="left:70.7px;top:248.97px;letter-spacing:0.27px">build</div>
<div class="t" style="left:70.7px;top:263.12px;letter-spacing:-0.3px">src</div>
<div class="t" style="left:83px;top:277.26px;letter-spacing:0.33px">main</div>
<div class="t" style="left:96px;top:291.41px;letter-spacing:-0.11px">ets</div>
<div class="t" style="left:96px;top:305.55px;letter-spacing:0.23px">resources</div>
<div class="t" style="left:96px;top:319.7px;letter-spacing:0.31px">module.json5</div>
<div class="t" style="left:83px;top:333.84px;letter-spacing:0.45px">ohosTest</div>
<div class="t" style="left:83px;top:347.99px;letter-spacing:0.36px">test</div>
<div class="t" style="left:70.7px;top:362.13px;letter-spacing:0.42px">.gitignore</div>
<div class="t" style="left:70.7px;top:376.28px;letter-spacing:0.35px">build-profile.json5</div>
<div class="t" style="left:70.7px;top:390.42px;letter-spacing:0.25px">hvigorfile.ts</div>
<div class="t" style="left:70.7px;top:404.56px;letter-spacing:0.12px">Index.ets</div>
<div class="t" style="left:70.7px;top:418.71px;letter-spacing:0.27px">obfuscation-rules.txt</div>
<div class="t" style="left:181.8px;top:5px;letter-spacing:0.33px">library1\...\module.json5</div>
<div class="ln" style="left:154.9px;width:20px;text-align:right;top:43.8px;color:#606366">1</div>
<div class="ln" style="left:154.9px;width:20px;text-align:right;top:59.4px;color:#606366">2</div>
<div class="ln" style="left:154.9px;width:20px;text-align:right;top:75px;color:#606366">3</div>
<div class="ln" style="left:154.9px;width:20px;text-align:right;top:90.6px;color:#606366">4</div>
<div class="ln" style="left:154.9px;width:20px;text-align:right;top:106.2px;color:#606366">5</div>
<div class="ln" style="left:154.9px;width:20px;text-align:right;top:121.8px;color:#606366">6</div>
<div class="ln" style="left:154.9px;width:20px;text-align:right;top:137.4px;color:#606366">7</div>
<div class="ln" style="left:154.9px;width:20px;text-align:right;top:153px;color:#606366">8</div>
<div class="ln" style="left:154.9px;width:20px;text-align:right;top:168.6px;color:#606366">9</div>
<div class="ln" style="left:154.9px;width:20px;text-align:right;top:184.2px;color:#606366">10</div>
<div class="ln" style="left:154.9px;width:20px;text-align:right;top:199.8px;color:#606366">11</div>
<div class="ln" style="left:154.9px;width:20px;text-align:right;top:215.4px;color:#606366">12</div>
<div class="ln" style="left:154.9px;width:20px;text-align:right;top:231px;color:#606366">13</div>
<div class="ln" style="left:154.9px;width:20px;text-align:right;top:246.6px;color:#a4a3a3">14</div>
<div class="c" style="left:205.7px;top:43.5px"><span style="color:#ffef28">{</span></div>
<div class="c" style="left:217.84px;top:59.1px"><span class="k">"module"</span><span class="o">:</span> {</div>
<div class="c" style="left:229.18px;top:74.7px"><span class="k">"name"</span><span class="o">:</span> <span class="s">"library1"</span><span class="o">,</span></div>
<div class="c" style="left:229.18px;top:90.3px"><span class="k">"type"</span><span class="o">:</span> <span class="s">"shared"</span><span class="o">,</span></div>
<div class="c" style="left:229.18px;top:105.9px"><span class="k">"description"</span><span class="o">:</span> <span style="color:#8c8c8c">description</span><span class="o">,</span></div>
<div class="c" style="left:229.18px;top:121.5px"><span class="k">"deviceTypes"</span><span class="o">:</span> [</div>
<div class="c" style="left:240.52px;top:137.1px"><span class="s">"phone"</span><span class="o">,</span></div>
<div class="c" style="left:240.52px;top:152.7px"><span class="s">"tablet"</span><span class="o">,</span></div>
<div class="c" style="left:240.52px;top:168.3px"><span class="s">"2in1"</span></div>
<div class="c" style="left:229.18px;top:183.9px">]<span class="o">,</span></div>
<div class="c" style="left:229.18px;top:199.5px"><span class="k">"deliveryWithInstall"</span><span class="o">:</span> <span class="o">true,</span></div>
<div class="c" style="left:229.18px;top:215.1px"><span class="k">"pages"</span><span class="o">:</span> <span class="s">"$profile:main_pages"</span></div>
<div class="c" style="left:217.84px;top:230.7px">}</div>
<div class="c" style="left:205.7px;top:246.3px"><span style="color:#ffef28">}</span></div>
<div class="t" style="left:699.8px;top:5px;letter-spacing:0.34px">library\...\module.json5</div>
<div class="ln" style="left:672.4px;width:20px;text-align:right;top:43.8px;color:#a4a3a3">1</div>
<div class="ln" style="left:672.4px;width:20px;text-align:right;top:59.4px;color:#606366">2</div>
<div class="ln" style="left:672.4px;width:20px;text-align:right;top:75px;color:#606366">3</div>
<div class="ln" style="left:672.4px;width:20px;text-align:right;top:90.6px;color:#606366">4</div>
<div class="ln" style="left:672.4px;width:20px;text-align:right;top:106.2px;color:#606366">5</div>
<div class="ln" style="left:672.4px;width:20px;text-align:right;top:121.8px;color:#606366">6</div>
<div class="ln" style="left:672.4px;width:20px;text-align:right;top:137.4px;color:#606366">7</div>
<div class="ln" style="left:672.4px;width:20px;text-align:right;top:153px;color:#606366">8</div>
<div class="ln" style="left:672.4px;width:20px;text-align:right;top:168.6px;color:#606366">9</div>
<div class="ln" style="left:672.4px;width:20px;text-align:right;top:184.2px;color:#606366">10</div>
<div class="ln" style="left:672.4px;width:20px;text-align:right;top:199.8px;color:#606366">11</div>
<div class="ln" style="left:672.4px;width:20px;text-align:right;top:215.4px;color:#606366">12</div>
<div class="ln" style="left:672.4px;width:20px;text-align:right;top:231px;color:#606366">13</div>
<div class="ln" style="left:672.4px;width:20px;text-align:right;top:246.6px;color:#606366">14</div>
<div class="c" style="left:723.7px;top:43.5px">{</div>
<div class="c" style="left:735.84px;top:59.1px"><span class="k">"module"</span><span class="o">:</span> {</div>
<div class="c" style="left:747.18px;top:74.7px"><span class="k">"name"</span><span class="o">:</span> <span class="s">"library"</span><span class="o">,</span></div>
<div class="c" style="left:747.18px;top:90.3px"><span class="k">"type"</span><span class="o">:</span> <span class="s">"shared"</span><span class="o">,</span></div>
<div class="c" style="left:747.18px;top:105.9px"><span class="k">"description"</span><span class="o">:</span> <span style="color:#8c8c8c">description</span><span class="o">,</span></div>
<div class="c" style="left:747.18px;top:121.5px"><span class="k">"deviceTypes"</span><span class="o">:</span> [</div>
<div class="c" style="left:758.52px;top:137.1px"><span class="s">"phone"</span><span class="o">,</span></div>
<div class="c" style="left:758.52px;top:152.7px"><span class="s">"tablet"</span><span class="o">,</span></div>
<div class="c" style="left:758.52px;top:168.3px"><span class="s">"2in1"</span></div>
<div class="c" style="left:747.18px;top:183.9px">]<span class="o">,</span></div>
<div class="c" style="left:747.18px;top:199.5px"><span class="k">"deliveryWithInstall"</span><span class="o">:</span> <span class="o">true,</span></div>
<div class="c" style="left:747.18px;top:215.1px"><span class="k">"pages"</span><span class="o">:</span> <span class="s">"$profile:main_pages"</span></div>
<div class="c" style="left:735.84px;top:230.7px">}</div>
<div class="c" style="left:723.7px;top:246.3px">}</div>
<svg class="L" width="1200" height="436" viewBox="0 0 1200 436" style="left:0;top:0">
<rect x="154" y="78" width="6" height="276.5" fill="rgba(166,166,166,0.28)"/>
</svg>
</body></html>
